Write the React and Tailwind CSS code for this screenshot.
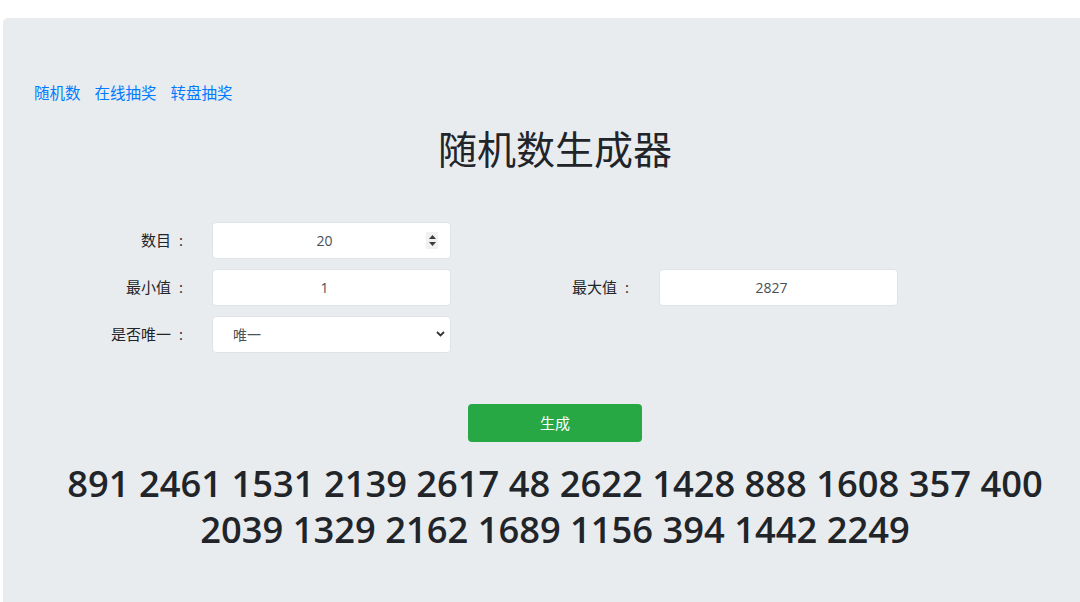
import { useState } from "react";

const font = { fontFamily: "'Open Sans', 'Noto Sans CJK SC', sans-serif" };

const numbers = [891, 2461, 1531, 2139, 2617, 48, 2622, 1428, 888, 1608, 357, 400, 2039, 1329, 2162, 1689, 1156, 394, 1442, 2249];

const Label = ({ children, className = "" }) => (
  <label className={`text-right text-[15px] text-[#212529] leading-[37px] ${className}`}>
    {children}
    <span className="inline-block w-[15px] pl-[8px] text-left">:</span>
  </label>
);

const inputCls =
  "h-[37px] w-[239px] rounded-[4px] border border-[#dfe3e7] bg-white text-center text-[14px] text-[#495057] outline-none";

export default function App() {
  const [count, setCount] = useState("20");
  const [min, setMin] = useState("1");
  const [max, setMax] = useState("2827");
  const [unique, setUnique] = useState("唯一");

  return (
    <div className="min-h-screen bg-white pt-[18px] pl-[3px]" style={font}>
      <div className="h-[584px] rounded-tl-[5px] bg-[#e9ecef] pt-[64px] pl-[31px] pr-[4px]">
        {/* nav links */}
        <div className="flex gap-[14px] text-[15.5px] leading-[22px] text-[#007bff]">
          <a href="#">随机数</a>
          <a href="#">在线抽奖</a>
          <a href="#">转盘抽奖</a>
        </div>

        <h1 className="mt-[22px] text-center text-[39px] leading-[46px] font-normal text-[#212529]">随机数生成器</h1>

        {/* form */}
        <div className="mt-[50px] flex flex-col gap-[10px]">
          <div className="flex items-center">
            <Label className="w-[152px]">数目</Label>
            <div className="relative ml-[26px]">
              <input className={`${inputCls} pr-[14px]`} value={count} onChange={(e) => setCount(e.target.value)} />
              <div className="absolute right-[13px] top-[10px] flex h-[17px] w-[12px] flex-col items-center justify-center gap-[3px] bg-[#f1f1f1]">
                <svg width="7" height="4" viewBox="0 0 7 4"><path d="M0 4 L3.5 0 L7 4 Z" fill="#3c3c3c" /></svg>
                <svg width="7" height="4" viewBox="0 0 7 4"><path d="M0 0 L3.5 4 L7 0 Z" fill="#3c3c3c" /></svg>
              </div>
            </div>
          </div>

          <div className="flex items-center">
            <Label className="w-[152px]">最小值</Label>
            <input className={`${inputCls} ml-[26px] pr-[14px]`} value={min} onChange={(e) => setMin(e.target.value)} />
            <Label className="w-[181px]">最大值</Label>
            <input className={`${inputCls} ml-[27px] pr-[14px]`} value={max} onChange={(e) => setMax(e.target.value)} />
          </div>

          <div className="flex items-center">
            <Label className="w-[152px]">是否唯一</Label>
            <div className="relative ml-[26px]">
              <select
                className={`${inputCls} appearance-none pl-[20px] text-left`}
                value={unique}
                onChange={(e) => setUnique(e.target.value)}
              >
                <option>唯一</option>
                <option>不唯一</option>
              </select>
              <svg className="pointer-events-none absolute right-[6px] top-[15px]" width="9" height="6" viewBox="0 0 9 6">
                <path d="M1 1 L4.5 4.5 L8 1" fill="none" stroke="#333" strokeWidth="1.8" />
              </svg>
            </div>
          </div>
        </div>

        <div className="mt-[51px] flex justify-center">
          <button className="h-[38px] w-[174px] rounded-[4px] bg-[#28a745] text-[15px] text-white">生成</button>
        </div>

        <div className="mt-[18px] text-center text-[36.3px] font-semibold leading-[46px] text-[#212529]">
          {numbers.join(" ")}
        </div>
      </div>
    </div>
  );
}
